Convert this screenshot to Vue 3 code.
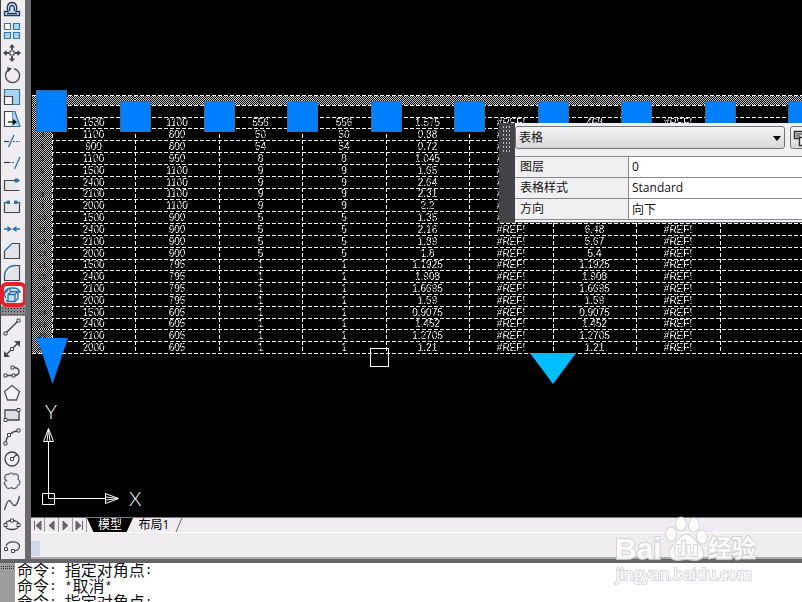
<script setup>
import { ref } from 'vue'

const ink = '#45454d'
const blue = '#2f6ea5'
const pale = '#a9d3ee'
const s = (d, stroke = ink, fill = 'none', w = 1.3, dash) => ({ d, stroke, fill, w, dash })
const node = (x, y) => s(`M${x - 1.5} ${y - 1.5}h3v3h-3z`, ink, '#fff', 1)

const modifyTools = [
  { name: 'Offset', parts: [
    s('M1.5 15.5h15v-4h-3.500C15 7 13 2.500 9 2.500S3 7 5 11.500H1.500z', '#23395c', '#d3e6f4', 1.4),
    s('M4 13.500h10M7 11C6 8 7 5.500 9 5.500s3 2.500 2 5.500', '#23395c') ] },
  { name: 'Array', parts: [
    s('M1.500 1.500h6v6h-6z', '#55708a', '#fff', 1.2),
    s('M10.500 1.500h6v6h-6zM1.500 10.500h6v6h-6zM10.500 10.500h6v6h-6z', '#3878a8', pale, 1.2) ] },
  { name: 'Move', parts: [
    s('M9 2v4M9 12v4M2 9h4M12 9h4', ink, 'none', 1.8),
    s('M7 7h4v4H7z', ink, '#fff', 1.2),
    s('M9 0l3 3.500H6zM9 18l3-3.500H6zM0 9l3.500-3v6zM18 9l-3.500-3v6z', 'none', ink) ] },
  { name: 'Rotate', parts: [
    s('M6 3.500A7 7 0 1 0 11 2.700', '#5c5c63', 'none', 1.5),
    s('M4 1l5 1.500-4 3.500z', 'none', ink) ] },
  { name: 'Scale', parts: [
    s('M1.500 1.500h15v15h-15z', '#3878a8', pale, 1.2),
    s('M1.500 8.500h8v8h-8z', ink, '#f5f3f6', 1.2) ] },
  { name: 'Stretch', parts: [
    s('M9 1.500h3l5 15H9z', '#3878a8', pale, 1.2),
    s('M9 1.500H1.500v15H9', ink, '#fff', 1.2),
    s('M5 12h6', '#111'), s('M10 9l4 3-4 3z', 'none', '#111') ] },
  { name: 'Trim', parts: [
    s('M1 9.500h5', ink), s('M5.500 15L11 3', blue), s('M10 9.500h7', blue, 'none', 1.2, '2 1') ] },
  { name: 'Extend', parts: [
    s('M1 8.500h5', ink), s('M6 8.500h6', blue, 'none', 1.2, '2 1'), s('M11.500 15L17 3', blue) ] },
  { name: 'Break at point', parts: [
    s('M16.500 14.500h-15v-10h11', ink, '#e6e6eb', 1.2), s('M12 3h3v3h-3zM15 4.500h2', blue, blue, 1) ] },
  { name: 'Break', parts: [
    s('M5 4.500H1.500v10h15v-10H13', ink, '#e6e6eb', 1.2), s('M4 3h2.500v2.500H4zM11.500 3H14v2.500h-2.500z', blue, blue, 1) ] },
  { name: 'Join', parts: [
    s('M1 9h4M13 9h4', blue), s('M4.500 6L9 9l-4.500 3zM13.500 6L9 9l4.500 3z', 'none', blue) ] },
  { name: 'Chamfer', parts: [
    s('M8 1.500h8.500v15h-15V9z', 'none', '#e3e3e9'),
    s('M1.500 9v7.500h15v-15H9', ink, 'none', 1.2), s('M1.500 9L9 1.500', blue) ] },
  { name: 'Fillet', parts: [
    s('M1.500 12v4.500h15v-15H13', ink, '#e3e3e9', 1.2), s('M1.500 12C1.500 6 6 1.500 13 1.500', blue) ] },
  { name: 'Explode', marked: true, parts: [
    s('M5 8.500h7v7H5zM5 8.500l3-3h7l-3 3M15 5.500v7l-3 3', blue, '#c1e2f4', 1.3),
    s('M3 12C-1 7 3 2 9 2c5 0 8 2 8 5M5 4L2 7M7 2v3M3 14l2 2', '#2478b4', 'none', 1.5) ] }
]

const drawTools = [
  { name: 'Line', parts: [s('M2.500 15.500L15.500 2.500', ink, 'none', 1.4), node(2.5, 15.5), node(15.5, 2.5)] },
  { name: 'Construction line', parts: [
    s('M3 15L15 3', ink, 'none', 1.4), node(9, 9),
    s('M17 1v6l-6-6zM1 17v-6l6 6z', 'none', ink) ] },
  { name: 'Polyline', parts: [
    s('M2.500 13.500h8C18 14 18 5 10 5.500', ink, 'none', 1.4), node(2.5, 13.5), node(10.5, 13.5), node(9.5, 5.5) ] },
  { name: 'Polygon', parts: [s('M9 1.500l7.500 6-3 8.500h-9l-3-8.500z', '#55555c', '#f5f3f6', 1.3)] },
  { name: 'Rectangle', parts: [s('M2 4h14v10H2z', ink, '#dedee4', 1.3), node(2.5, 14), node(15.5, 4)] },
  { name: 'Arc', parts: [s('M2.500 15.500Q4 4 15.500 2.500', ink, 'none', 1.4), node(2.5, 15.5), node(6, 7), node(15.5, 2.5)] },
  { name: 'Circle', parts: [s('M16 9A7 7 0 1 1 2 9a7 7 0 1 1 14 0zM9 9l5-5', ink, 'none', 1.3), node(9, 9)] },
  { name: 'Revision cloud', parts: [
    s('M3.500 8.500C0 6 2 1.500 5.500 2.500 7 .5 10 1 10.500 2.500c3-1.500 6 .5 4.500 4.500 3 2 2.500 6-.5 6.500-.5 3-4 4-6 2-3 2-6 .5-5.500-2-2.500-1-2-4 .5-5z', '#66666d', '#efedf1', 1.3) ] },
  { name: 'Spline', parts: [s('M1.500 16C5 3 7 6 9 9.500S14 13 16.500 2', '#55555c', 'none', 1.4)] },
  { name: 'Ellipse', parts: [
    s('M2 9c0-6 14-6 14 0s-14 6-14 0z', ink, 'none', 1.3), node(2.5, 9), node(15.5, 9), node(9, 4.5) ] },
  { name: 'Ellipse arc', parts: [
    s('M3 8C5 2 17 3 16.500 8.500 16 12 14 13 10 13', ink, 'none', 1.3), node(3, 11), node(10, 13) ] }
]

const columns = [
  [1530, 1100, 900, 1100, 1500, 2400, 2100, 2000, 1500, 2400, 2100, 2000, 1500, 2400, 2100, 2000, 1500, 2400, 2100, 2000],
  [1100, 800, 800, 950, 1100, 1100, 1100, 1100, 900, 900, 900, 900, 795, 795, 795, 795, 605, 605, 605, 605],
  [556, 50, 54, 8, 9, 9, 9, 9, 5, 5, 5, 5, 1, 1, 1, 1, 1, 1, 1, 1],
  [556, 50, 54, 8, 9, 9, 9, 9, 5, 5, 5, 5, 1, 1, 1, 1, 1, 1, 1, 1],
  ['1.575', '0.88', '0.72', '1.045', '1.65', '2.64', '2.31', '2.2', '1.35', '2.16', '1.89', '1.8', '1.1925', '1.908', '1.6695', '1.59', '0.9075', '1.452', '1.2705', '1.21'],
  Array(20).fill('#REF!'),
  ['468', '44', '38.8', '8.36', '14.8', '23.7', '20.7', '19.8', '6.75', '6.48', '5.67', '5.4', '1.1925', '1.908', '1.6695', '1.59', '0.9075', '1.452', '1.2705', '1.21'],
  Array(20).fill('#REF!'),
  Array(20).fill('')
]
const letters = ['A', 'B', 'C', 'D', 'E', 'F', 'G', 'H', 'I']
const shortRows = [0, 6, 12, 17]
const rows = columns[0].map((_, r) => columns.map(c => c[r]))
const gripLefts = [89, 173, 256, 340, 423, 507, 590, 674, 757]

const objectType = ref('表格')
const props = ref([
  { id: 'layer', label: '图层', value: '0' },
  { id: 'style', label: '表格样式', value: 'Standard' },
  { id: 'direction', label: '方向', value: '向下' }
])
const history = [
  [['命令', 0], [': ', 1], ['指定对角点', 0], [':', 1]],
  [['命令', 0], [': *', 1], ['取消', 0], ['*', 1]],
  [['命令', 0], [': ', 1], ['指定对角点', 0], [':', 1]]
]
const navs = [
  { name: 'First', d: 'M3.500 2v9M10 2v9L5 6.500z' },
  { name: 'Previous', d: 'M9 2v9L4 6.500z' },
  { name: 'Next', d: 'M4 2v9l5-4.500z' },
  { name: 'Last', d: 'M9.500 2v9M3 2v9l5-4.500z' }
]
</script>

<template>
  <div class="app">
    <div class="workspace">
      <nav class="toolbar">
        <template v-for="(group, g) in [modifyTools, drawTools]" :key="g">
          <div v-if="g" class="divider"></div>
          <button v-for="t in group" :key="t.name" class="tool" :class="{ marked: t.marked }" :aria-label="t.name">
            <svg width="18" height="18" viewBox="0 0 18 18">
              <path v-for="(p, i) in t.parts" :key="i" :d="p.d" :stroke="p.stroke" :fill="p.fill" :stroke-width="p.w" :stroke-dasharray="p.dash" />
            </svg>
          </button>
        </template>
      </nav>

      <div class="main">
        <div class="canvas">
          <table class="sheet">
            <colgroup>
              <col class="c-num">
              <col v-for="(l, i) in letters" :key="l" :class="i % 2 ? 'c-wide' : 'c-narrow'">
            </colgroup>
            <thead>
              <tr class="head">
                <th></th>
                <th v-for="l in letters" :key="l">{{ l }}</th>
              </tr>
            </thead>
            <tbody>
              <tr><th></th><td v-for="l in letters" :key="l"></td></tr>
              <tr v-for="(row, r) in rows" :key="r" :class="{ short: shortRows.includes(r) }">
                <th>{{ r + 2 }}</th>
                <td v-for="(v, c) in row" :key="c"><span>{{ v }}</span></td>
              </tr>
            </tbody>
          </table>

          <i class="grip first"></i>
          <i v-for="x in gripLefts" :key="x" class="grip" :style="{ left: x + 'px' }"></i>
          <svg class="arrow-left" width="31" height="46" viewBox="0 0 31 46"><path d="M0 0h31L15.500 46z" fill="#0080ff" /></svg>
          <svg class="arrow-mid" width="46" height="31" viewBox="0 0 46 31"><path d="M0 0h46L23 31z" fill="#00bfff" /></svg>
          <i class="pickbox"></i>

          <svg class="ucs" width="110" height="110" viewBox="0 0 110 110" fill="none" stroke="#fff">
            <path d="M2.500 94.500h12v11h-12zM8.500 43v56.500H65" />
            <path d="M8.500 29.500l5 13h-10zM7 42l1.500-12 1.500 12M65.500 94.500v10l13-5zM66 98l12 1.500L66 101" />
            <text x="5" y="20" class="axis">Y</text>
            <text x="89" y="107" class="axis">X</text>
          </svg>

          <section class="panel">
            <div class="handle"><i></i></div>
            <div class="panel-body">
              <div class="panel-top">
                <div class="picker">
                  <select v-model="objectType" aria-label="对象类型"><option>表格</option></select>
                  <svg width="8" height="5" viewBox="0 0 8 5"><path d="M0 0h8L4 5z" /></svg>
                </div>
                <button class="customize" aria-label="自定义">
                  <svg width="18" height="18" viewBox="0 0 18 18" fill="#ddd" stroke="#333"><path d="M1.500 2.500h10v7h-10z" stroke-width="1.500" /><path d="M3 5h7M3 7h4" /><path d="M6.500 8.500h10v8h-10z" fill="#fff" stroke-width="1.500" /></svg>
                </button>
              </div>
              <div class="fields">
                <div v-for="p in props" :key="p.id" class="field">
                  <label :for="p.id">{{ p.label }}</label>
                  <input :id="p.id" v-model="p.value" type="text">
                </div>
              </div>
            </div>
          </section>
        </div>

        <div class="tabs">
          <button v-for="n in navs" :key="n.name" class="nav" :aria-label="n.name">
            <svg width="13" height="13" viewBox="0 0 13 13"><path :d="n.d" fill="#66666b" stroke="#66666b" /></svg>
          </button>
          <button class="tab active">模型</button>
          <button class="tab">布局1</button>
          <svg class="slash" width="8" height="14" viewBox="0 0 8 14"><path d="M1 14L7 0" stroke="#666" /></svg>
        </div>
        <div class="status"><i></i></div>
      </div>
    </div>

    <footer class="command">
      <div class="command-grip"><i></i></div>
      <div class="log">
        <p v-for="(line, i) in history" :key="i"><span v-for="(part, j) in line" :key="j" :class="{ half: part[1] }">{{ part[0] }}</span></p>
      </div>
    </footer>

    <svg class="watermark" width="150" height="70" viewBox="0 0 150 70">
      <g fill="#fff" stroke="#d0d0d4" stroke-width="2" paint-order="stroke" opacity="0.85">
        <text x="1" y="43" class="brand">Bai</text>
        <ellipse cx="57" cy="18" rx="5" ry="6.500" /><ellipse cx="67" cy="8" rx="5" ry="6.500" />
        <ellipse cx="80" cy="9" rx="5" ry="6.500" /><ellipse cx="88" cy="21" rx="5" ry="6.500" />
        <path d="M72 19c-5 0-8 6-13 11-6 6-3 14 4 14 4 0 6-1 9-1s6 1 10 1c7 0 10-8 4-14-5-5-8-11-14-11z" />
        <text x="60" y="40" class="du">du</text>
        <text x="94" y="41" class="jy">经验</text>
        <text x="2" y="64" class="url">jingyan.baidu.com</text>
      </g>
    </svg>
  </div>
</template>

<style>
body {
  margin: 0;
  overflow: hidden;
}
</style>

<style scoped>
.app {
  position: relative;
  display: flex;
  flex-direction: column;
  height: 100vh;
  overflow: hidden;
  background: #f0eef1;
  font-family: "Open Sans", "Noto Sans CJK SC", sans-serif;
  font-size: 12px;
  color: #111;
}
button {
  margin: 0;
  padding: 0;
  border: 0;
  background: none;
  font: inherit;
}
.workspace {
  flex: 1;
  display: flex;
  min-height: 0;
  border-bottom: 4px solid #656467;
}
.toolbar {
  flex: none;
  width: 24px;
  margin-top: -2px;
  border-left: 1px solid #444;
  background: #efedf1;
}
.tool {
  position: relative;
  display: flex;
  align-items: center;
  justify-content: center;
  width: 22px;
  height: 22px;
}
.tool svg { display: block; }
.marked::after {
  content: "";
  position: absolute;
  inset: -2px -4px -1px -1px;
  border: 4px solid #e8202c;
  border-radius: 7px;
}
.divider {
  height: 10px;
  background: radial-gradient(circle, #333 1px, transparent 1px) 3px 1px / 3px 3px #8a898c;
}
.main {
  flex: 1;
  display: flex;
  flex-direction: column;
  min-width: 0;
  border-left: 6px solid #6b6a6d;
  position: relative;
}
.canvas {
  position: relative;
  flex: 1;
  overflow: hidden;
  background: #000;
}
.sheet {
  position: absolute;
  left: 1px;
  top: 95px;
  width: 771px;
  table-layout: fixed;
  border-spacing: 0;
  color: #fff;
  font: 10px/10px "Liberation Sans", sans-serif;
  background: repeating-linear-gradient(90deg, #fff 0 4px, transparent 4px 6px) 0 100% / 100% 1px no-repeat;
  padding-bottom: 1px;
}
.c-num { width: 20px; }
.c-narrow { width: 83px; }
.c-wide { width: 84px; }
.sheet tr {
  height: 12px;
  background: repeating-linear-gradient(90deg, #fff 0 4px, transparent 4px 6px) 0 0 / 100% 1px no-repeat;
}
.sheet tr.short { height: 11px; }
.sheet tr.head { height: 10px; }
.sheet th, .sheet td {
  padding: 1px 0 0;
  text-align: center;
  white-space: nowrap;
}
.sheet td {
  background: repeating-linear-gradient(#fff 0 4px, transparent 4px 6px) 0 0 / 1px 100% no-repeat;
}
.sheet td span {
  display: block;
  height: 10px;
  mask-image: repeating-linear-gradient(115deg, #000 0 3px, rgba(0, 0, 0, 0.3) 3px 4px);
}
.sheet th {
  color: #222;
  font-size: 8px;
  line-height: 9px;
  font-weight: normal;
  background: repeating-conic-gradient(#c4c4c4 0 25%, #0a0a0a 0 50%) 0 1px / 2px 2px;
}
.sheet .head th { padding: 0; background-clip: padding-box; border-top: 1px solid transparent; }
.grip {
  position: absolute;
  top: 101px;
  width: 29px;
  height: 29px;
  border: 1px solid #3c6a9c;
  background: #0080ff;
}
.grip.first {
  left: 5px;
  top: 90px;
  height: 40px;
  background: linear-gradient(#0080ff 10px, #3c6a9c 10px 11px, #0080ff 11px);
}
.arrow-left { position: absolute; left: 6px; top: 338px; }
.arrow-mid { position: absolute; left: 499px; top: 353px; }
.pickbox {
  position: absolute;
  left: 339px;
  top: 348px;
  width: 17px;
  height: 17px;
  border: 1px solid #fff;
}
.ucs { position: absolute; left: 9px; top: 399px; }
.axis {
  fill: #fff;
  stroke: none;
  font: 300 20px Lato, sans-serif;
}
.panel {
  position: absolute;
  left: 468px;
  right: 0;
  top: 123px;
  display: flex;
  border-bottom: 1px solid #555;
  background: #f0eff1;
}
.handle {
  width: 16px;
  padding-top: 3px;
  background: #434246;
}
.handle i {
  display: block;
  width: 9px;
  height: 27px;
  margin-left: 4px;
  background: conic-gradient(transparent 75%, #b9b9bc 0) 0 0 / 3px 4px;
}
.panel-body { flex: 1; min-width: 0; }
.panel-top {
  display: flex;
  gap: 5px;
  padding: 3px 0 7px;
  overflow: hidden;
}
.picker {
  flex: none;
  position: relative;
  width: 270px;
}
.picker select {
  display: block;
  box-sizing: border-box;
  appearance: none;
  width: 100%;
  height: 23px;
  padding: 0 3px;
  border: 1px solid #747478;
  border-radius: 3px;
  background: linear-gradient(#f5f4f6, #d8d7da);
  font: inherit;
  color: inherit;
}
.picker svg { position: absolute; right: 4px; top: 10px; }
.customize {
  flex: none;
  box-sizing: border-box;
  width: 24px;
  height: 23px;
  border: 1px solid #747478;
  border-radius: 3px;
  background: linear-gradient(#f5f4f6, #d8d7da);
}
.customize svg { display: block; margin-left: 2px; }
.fields { padding-bottom: 2px; border-top: 1px solid #88878b; }
.field {
  display: flex;
  height: 20px;
  border-bottom: 1px solid #88878b;
}
.field label {
  box-sizing: border-box;
  width: 114px;
  padding-left: 5px;
  border-right: 1px solid #88878b;
  line-height: 20px;
}
.field input {
  flex: 1;
  min-width: 0;
  padding: 0 3px 1px;
  border: 0;
  background: #fff;
  font: inherit;
  color: inherit;
}
.tabs {
  display: flex;
  height: 14px;
  border-top: 1px solid #77767a;
  border-bottom: 1px solid #fff;
  background: #efedf1;
}
.nav {
  width: 14px;
  height: 14px;
  border-right: 1px solid #99989c;
}
.nav svg { display: block; }
.tab {
  width: 42px;
  line-height: 14px;
  white-space: nowrap;
}
.tab.active {
  width: 46px;
  color: #fff;
  background: #000;
  clip-path: polygon(0 0, 100% 0, 86% 100%, 14% 100%);
}
.slash { display: block; }
.status {
  height: 23px;
  padding-top: 1px;
  border-bottom: 2px solid #aaa9ad;
  background: #efedf0;
}
.status i {
  display: block;
  width: 9px;
  height: 15px;
  margin-top: 7px;
  background: #d2d7ea;
}
.command {
  display: flex;
  height: 39px;
  overflow: hidden;
  background: #fff;
}
.command-grip {
  width: 15px;
  background: #9d9c9f;
}
.command-grip i {
  display: block;
  height: 4px;
  margin: 3px 1px;
  background: conic-gradient(transparent 75%, #333 0) 0 0 / 2px 2px;
}
.log {
  margin-top: -2px;
  padding-left: 2px;
  font: 16px/16px "Noto Sans CJK SC", sans-serif;
}
.log p {
  display: flex;
  margin: 0;
  height: 16px;
  white-space: pre;
}
.log .half { font: 13px/19px "Liberation Mono", monospace; }
.watermark {
  position: absolute;
  right: 38px;
  bottom: 16px;
  pointer-events: none;
}
.brand { font: bold 30px "Liberation Sans", sans-serif; }
.du { font: bold 20px "Liberation Sans", sans-serif; }
.jy { font: bold 24px "Noto Sans CJK SC", sans-serif; }
.url { font: 16px "Open Sans", sans-serif; }
</style>
